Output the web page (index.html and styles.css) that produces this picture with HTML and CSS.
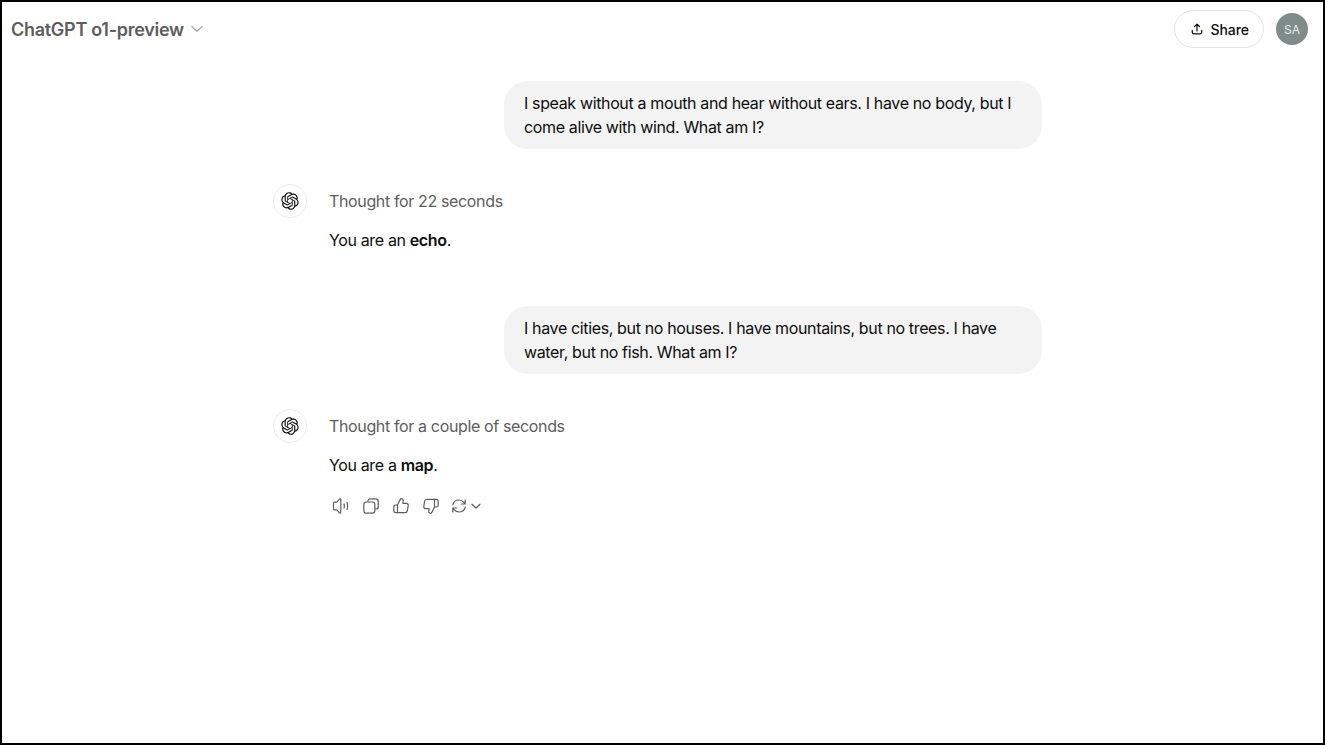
FILE: index.html
```html
<!DOCTYPE html>
<html lang="en">

<head>
    <meta charset="UTF-8">
    <meta name="viewport" content="width=device-width, initial-scale=1.0">
    <title>ChatGPT o1-preview</title>
    <link rel="stylesheet" href="styles.css">
</head>

<body>
    <svg class="defs" width="0" height="0" aria-hidden="true">
        <symbol id="openai" viewBox="0 0 41 41">
            <path fill="currentColor" d="M37.5324 16.8707C37.9808 15.5241 38.1363 14.0974 37.9886 12.6859C37.8409 11.2744 37.3934 9.91076 36.676 8.68622C35.6126 6.83404 33.9882 5.3676 32.0373 4.4985C30.0864 3.62941 27.9098 3.40259 25.8215 3.85078C24.8796 2.7893 23.7219 1.94125 22.4257 1.36341C21.1295 0.785575 19.7249 0.491269 18.3058 0.500197C16.1708 0.495044 14.0893 1.16803 12.3614 2.42214C10.6335 3.67624 9.34853 5.44666 8.6917 7.47815C7.30085 7.76286 5.98686 8.3414 4.8377 9.17505C3.68854 10.0087 2.73073 11.0782 2.02839 12.312C0.956464 14.1591 0.498905 16.2988 0.721698 18.4228C0.944492 20.5467 1.83612 22.5449 3.268 24.1293C2.81966 25.4759 2.66413 26.9026 2.81182 28.3141C2.95951 29.7256 3.40701 31.0892 4.12437 32.3138C5.18791 34.1659 6.8123 35.6322 8.76321 36.5013C10.7141 37.3704 12.8907 37.5973 14.9789 37.1492C15.9208 38.2107 17.0786 39.0587 18.3747 39.6366C19.6709 40.2144 21.0755 40.5087 22.4946 40.4998C24.6307 40.5054 26.7133 39.8321 28.4418 38.5772C30.1704 37.3223 31.4556 35.5506 32.1119 33.5179C33.5027 33.2332 34.8167 32.6547 35.9659 31.821C37.115 30.9874 38.0728 29.9178 38.7752 28.684C39.8458 26.8371 40.3023 24.6979 40.0789 22.5748C39.8556 20.4517 38.9639 18.4544 37.5324 16.8707ZM22.4978 37.8849C20.7443 37.8874 19.0459 37.2733 17.6994 36.1501C17.7601 36.117 17.8666 36.0586 17.936 36.0161L25.9004 31.4156C26.1003 31.3019 26.2663 31.137 26.3813 30.9378C26.4964 30.7386 26.5563 30.5124 26.5549 30.2825V19.0542L29.9213 20.998C29.9389 21.0068 29.9541 21.0198 29.9656 21.0359C29.977 21.052 29.9842 21.0707 29.9867 21.0902V30.3889C29.9842 32.375 29.1946 34.2791 27.7909 35.6841C26.3872 37.0892 24.4838 37.8806 22.4978 37.8849ZM6.39227 31.0064C5.51397 29.4888 5.19742 27.7107 5.49804 25.9832C5.55718 26.0187 5.66048 26.0818 5.73461 26.1244L13.699 30.7248C13.8975 30.8408 14.1233 30.902 14.3532 30.902C14.583 30.902 14.8088 30.8408 15.0073 30.7248L24.731 25.1103V28.9979C24.7321 29.0177 24.7283 29.0376 24.7199 29.0556C24.7115 29.0736 24.6988 29.0893 24.6829 29.1012L16.6317 33.7497C14.9096 34.7416 12.8643 35.0097 10.9447 34.4954C9.02506 33.9811 7.38785 32.7263 6.39227 31.0064ZM4.29707 13.6194C5.17156 12.0998 6.55279 10.9364 8.19885 10.3327C8.19885 10.4013 8.19491 10.5228 8.19491 10.6071V19.808C8.19351 20.0378 8.25334 20.2638 8.36823 20.4629C8.48312 20.6619 8.64893 20.8267 8.84863 20.9404L18.5723 26.5542L15.206 28.4979C15.1894 28.5089 15.1703 28.5155 15.1505 28.5173C15.1307 28.5191 15.1107 28.516 15.0924 28.5082L7.04046 23.8557C5.32135 22.8601 4.06716 21.2235 3.55289 19.3046C3.03862 17.3858 3.30624 15.3413 4.29707 13.6194ZM31.955 20.0556L22.2312 14.4411L25.5976 12.4981C25.6142 12.4872 25.6333 12.4805 25.6531 12.4787C25.6729 12.4769 25.6928 12.4801 25.7111 12.4879L33.7631 17.1364C34.9967 17.849 36.0017 18.8982 36.6606 20.1613C37.3194 21.4244 37.6047 22.849 37.4832 24.2684C37.3617 25.6878 36.8382 27.0432 35.9743 28.1759C35.1103 29.3086 33.9415 30.1717 32.6047 30.6641C32.6047 30.5947 32.6047 30.4733 32.6047 30.3889V21.188C32.6066 20.9586 32.5474 20.7328 32.4332 20.5338C32.319 20.3348 32.154 20.1698 31.955 20.0556ZM35.3055 15.0128C35.2464 14.9765 35.1431 14.9142 35.069 14.8717L27.1045 10.2712C26.906 10.1554 26.6803 10.0943 26.4504 10.0943C26.2206 10.0943 25.9948 10.1554 25.7963 10.2712L16.0726 15.8858V11.9982C16.0715 11.9783 16.0753 11.9585 16.0837 11.9405C16.0921 11.9225 16.1048 11.9068 16.1207 11.8949L24.1719 7.25025C25.4053 6.53903 26.8158 6.19376 28.2383 6.25482C29.6608 6.31589 31.0364 6.78077 32.2044 7.59508C33.3723 8.40939 34.2842 9.53945 34.8334 10.8531C35.3826 12.1667 35.5464 13.6095 35.3055 15.0128ZM14.2424 21.9419L10.8752 19.9981C10.8576 19.9893 10.8423 19.9763 10.8309 19.9602C10.8195 19.9441 10.8122 19.9254 10.8098 19.9058V10.6071C10.8107 9.18295 11.2173 7.78848 11.9819 6.58696C12.7466 5.38544 13.8377 4.42659 15.1275 3.82264C16.4173 3.21869 17.8524 2.99464 19.2649 3.1767C20.6775 3.35876 22.0089 3.93941 23.1034 4.85067C23.0427 4.88379 22.937 4.94215 22.8668 4.98473L14.9024 9.58517C14.7025 9.69878 14.5366 9.86356 14.4215 10.0626C14.3065 10.2616 14.2466 10.4877 14.2479 10.7175L14.2424 21.9419ZM16.071 17.9991L20.4018 15.4978L24.7325 17.9975V22.9985L20.4018 25.4983L16.071 22.9985V17.9991Z"/>
        </symbol>
    </svg>

    <div class="app-frame">
        <header class="top-bar">
            <div class="model-switcher">
                <span class="model-name">ChatGPT o1-preview</span>
                <svg class="model-caret" viewBox="0 0 16 16" fill="none" stroke="currentColor" stroke-width="1.3" stroke-linecap="round" stroke-linejoin="round">
                    <path d="M3 5.8 8 10.2l5-4.400"/>
                </svg>
            </div>
            <div class="top-actions">
                <button class="share-button" type="button">
                    <svg class="share-icon" viewBox="0 0 16 16" fill="none" stroke="currentColor" stroke-width="1.4" stroke-linecap="round" stroke-linejoin="round">
                        <path d="M8 10.200V2.600M5.200 5.200 8 2.400l2.800 2.800M2.600 9.600v2.200c0 1 .7 1.700 1.700 1.700h7.400c1 0 1.700-.7 1.700-1.700V9.600"/>
                    </svg>
                    Share
                </button>
                <div class="user-avatar">SA</div>
            </div>
        </header>

        <main class="thread">
            <div class="user-row">
                <div class="user-bubble">I speak without a mouth and hear without ears. I have no body, but I come alive with wind. What am I?</div>
            </div>

            <div class="reply-row">
                <div class="bot-avatar"><svg class="bot-logo"><use href="#openai"/></svg></div>
                <div class="reply-body">
                    <div class="thought">Thought for 22 seconds</div>
                    <p class="answer">You are an <strong>echo</strong>.</p>
                </div>
            </div>

            <div class="user-row user-row-next">
                <div class="user-bubble">I have cities, but no houses. I have mountains, but no trees. I have water, but no fish. What am I?</div>
            </div>

            <div class="reply-row">
                <div class="bot-avatar"><svg class="bot-logo"><use href="#openai"/></svg></div>
                <div class="reply-body">
                    <div class="thought">Thought for a couple of seconds</div>
                    <p class="answer">You are a <strong>map</strong>.</p>
                    <div class="reply-actions">
                        <!-- read aloud -->
                        <svg class="action-icon" viewBox="0 0 18 18" fill="none" stroke="currentColor" stroke-width="1.2" stroke-linecap="round" stroke-linejoin="round">
                            <path d="M1.500 6.200c0-.6.4-1 1-1h1.800c.3 0 .6-.1.800-.4l2.400-2.700c.5-.5 1.300-.2 1.300.5v12.800c0 .7-.8 1-1.300.5l-2.400-2.700c-.2-.3-.5-.4-.8-.4H2.500c-.6 0-1-.4-1-1V6.200z"/>
                            <path d="M12 7c.4 1.300.4 2.700 0 4M15 5.500c.8 2.300.8 4.700 0 7"/>
                        </svg>
                        <!-- copy -->
                        <svg class="action-icon" viewBox="0 0 18 18" fill="none" stroke="currentColor" stroke-width="1.2" stroke-linejoin="round">
                            <path d="M6 4.800V3.800C6 2.600 6.900 1.800 8 1.800h5.800c1.300 0 2.400 1.100 2.400 2.400V10c0 1.100-.8 2-1.900 2H13"/>
                            <rect x="1.800" y="5" width="11" height="11.200" rx="2.400"/>
                        </svg>
                        <!-- good response -->
                        <svg class="action-icon" viewBox="0 0 18 18" fill="none" stroke="currentColor" stroke-width="1.2" stroke-linecap="round" stroke-linejoin="round">
                            <path d="M5.500 8 8.200 2.600c.2-.5.600-.9 1.200-.9 1.100 0 1.900.9 1.800 2l-.3 2.600h3.400c1.200 0 2.100 1.100 1.900 2.300l-.8 5c-.2 1.200-1.100 2-2.300 2H3.800c-1.100 0-2-.9-2-2V9.800c0-1 .8-1.800 1.800-1.800h1.900v7.800"/>
                        </svg>
                        <!-- bad response -->
                        <svg class="action-icon" viewBox="0 0 18 18" fill="none" stroke="currentColor" stroke-width="1.2" stroke-linecap="round" stroke-linejoin="round">
                            <path d="M12.500 10 9.800 15.400c-.2.500-.6.900-1.200.9-1.100 0-1.900-.9-1.800-2l.3-2.600H3.700c-1.200 0-2.100-1.100-1.900-2.300l.8-5c.2-1.200 1.100-2 2.300-2h9.300c1.100 0 2 .9 2 2v3.800c0 1-.8 1.800-1.800 1.800h-1.900V2.200"/>
                        </svg>
                        <!-- regenerate -->
                        <div class="regen">
                            <svg class="action-icon" viewBox="0 0 18 18" fill="none" stroke="currentColor" stroke-width="1.2" stroke-linecap="round" stroke-linejoin="round">
                                <path d="M2.800 7.800C3.500 5 6 3 9 3c2 0 3.700.9 4.900 2.300L15.200 7M15.200 3v4h-4"/>
                                <path d="M15.200 10.200C14.500 13 12 15 9 15c-2 0-3.700-.9-4.900-2.300L2.800 11M2.800 15v-4h4"/>
                            </svg>
                            <svg class="regen-caret" viewBox="0 0 12 12" fill="none" stroke="currentColor" stroke-width="1.200" stroke-linecap="round" stroke-linejoin="round">
                                <path d="M2 4.200 6 8l4-3.800"/>
                            </svg>
                        </div>
                    </div>
                </div>
            </div>
        </main>
    </div>
</body>

</html>
```

FILE: styles.css
```css
* {
    margin: 0;
    padding: 0;
    box-sizing: border-box;
    font-family: 'Inter', 'Liberation Sans', sans-serif;
}

body {
    background: white;
    color: #0d0d0d;
}

.defs {
    display: block;
}

.app-frame {
    height: 745px;
    border: 2px solid black;
    overflow: hidden;
}

.top-bar {
    display: flex;
    justify-content: space-between;
    align-items: center;
    height: 54px;
    padding: 0 15px 0 9px;
}

.model-switcher {
    display: flex;
    align-items: center;
    gap: 5px;
    color: #5d5d5d;
}

.model-name {
    font-size: 18px;
    font-weight: 600;
    letter-spacing: -0.28px;
}

.model-caret {
    width: 16px;
    height: 16px;
    color: #a8a8a8;
}

.top-actions {
    display: flex;
    align-items: center;
    gap: 12px;
}

.share-button {
    display: flex;
    align-items: center;
    gap: 6px;
    height: 38px;
    padding: 0 14px 0 15px;
    background: white;
    border: 1px solid #e3e3e3;
    border-radius: 19px;
    color: #0d0d0d;
    font-size: 14px;
    font-weight: 500;
    letter-spacing: -0.05px;
}

.share-icon {
    width: 14px;
    height: 14px;
}

.user-avatar {
    display: flex;
    justify-content: center;
    align-items: center;
    width: 32px;
    height: 32px;
    border-radius: 50%;
    background: #7f8c8a;
    color: #e4e9e8;
    font-size: 12px;
}

.thread {
    width: 769px;
    margin-left: 271px;
    padding-top: 25px;
    font-size: 16px;
    line-height: 24px;
    letter-spacing: -0.36px;
}

.user-row {
    display: flex;
    justify-content: flex-end;
}

.user-row-next {
    margin-top: 54px;
}

.user-bubble {
    width: 538px;
    padding: 10px 20px;
    background: #f3f3f3;
    border-radius: 24px;
}

.reply-row {
    display: flex;
    gap: 22px;
    margin-top: 35px;
}

.bot-avatar {
    display: flex;
    justify-content: center;
    align-items: center;
    flex-shrink: 0;
    width: 34px;
    height: 34px;
    border: 1px solid #ececec;
    border-radius: 50%;
}

.bot-logo {
    width: 18px;
    height: 18px;
}

.reply-body {
    padding-top: 5px;
}

.thought {
    color: #5d5d5d;
}

.answer {
    margin-top: 15px;
}

.answer strong {
    font-weight: 600;
}

.reply-actions {
    display: flex;
    align-items: center;
    gap: 12px;
    margin-top: 20px;
    padding-left: 3px;
    color: #5d5d5d;
}

.action-icon {
    width: 18px;
    height: 18px;
}

.regen {
    display: flex;
    align-items: center;
    gap: 2px;
    margin-left: -2px;
}

.regen-caret {
    width: 12px;
    height: 12px;
}
```
